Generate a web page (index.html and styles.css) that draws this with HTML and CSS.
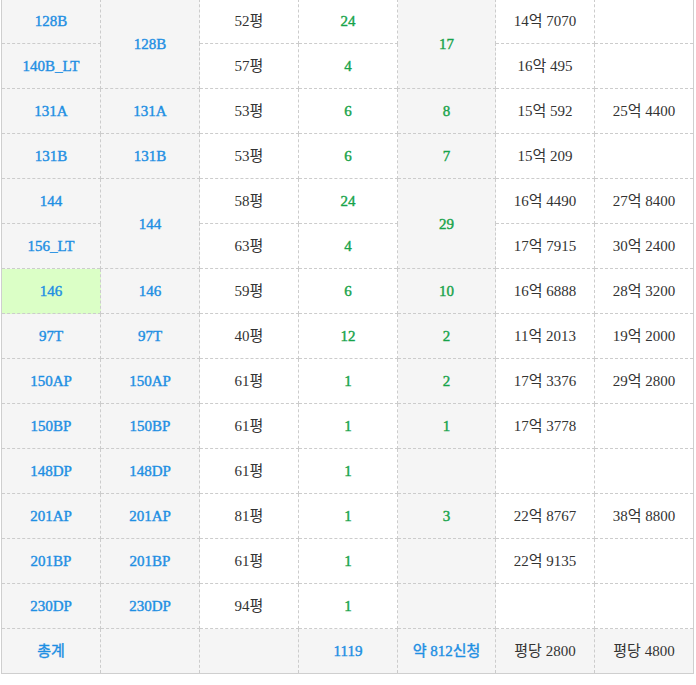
FILE: index.html
```html
<!DOCTYPE html>
<html lang="ko">
<head>
<meta charset="utf-8">
<title>분양가</title>
<link rel="stylesheet" href="styles.css">
</head>
<body>
<div class="wrap">
<table class="price">
<colgroup>
<col class="c"><col class="c"><col class="c"><col class="c"><col class="c5"><col class="c"><col class="c">
</colgroup>
<tbody>
<tr><td class="g b">128B</td><td class="g b" rowspan="2">128B</td><td>52평</td><td class="gr">24</td><td class="g gr" rowspan="2">17</td><td>14억 7070</td><td></td></tr>
<tr><td class="g b">140B_LT</td><td>57평</td><td class="gr">4</td><td>16악 495</td><td></td></tr>
<tr><td class="g b">131A</td><td class="g b">131A</td><td>53평</td><td class="gr">6</td><td class="g gr">8</td><td>15억 592</td><td>25억 4400</td></tr>
<tr><td class="g b">131B</td><td class="g b">131B</td><td>53평</td><td class="gr">6</td><td class="g gr">7</td><td>15억 209</td><td></td></tr>
<tr><td class="g b">144</td><td class="g b" rowspan="2">144</td><td>58평</td><td class="gr">24</td><td class="g gr" rowspan="2">29</td><td>16억 4490</td><td>27억 8400</td></tr>
<tr><td class="g b">156_LT</td><td>63평</td><td class="gr">4</td><td>17억 7915</td><td>30억 2400</td></tr>
<tr><td class="hl b">146</td><td class="g b">146</td><td>59평</td><td class="gr">6</td><td class="g gr">10</td><td>16억 6888</td><td>28억 3200</td></tr>
<tr><td class="g b">97T</td><td class="g b">97T</td><td>40평</td><td class="gr">12</td><td class="g gr">2</td><td>11억 2013</td><td>19억 2000</td></tr>
<tr><td class="g b">150AP</td><td class="g b">150AP</td><td>61평</td><td class="gr">1</td><td class="g gr">2</td><td>17억 3376</td><td>29억 2800</td></tr>
<tr><td class="g b">150BP</td><td class="g b">150BP</td><td>61평</td><td class="gr">1</td><td class="g gr">1</td><td>17억 3778</td><td></td></tr>
<tr><td class="g b">148DP</td><td class="g b">148DP</td><td>61평</td><td class="gr">1</td><td class="g"></td><td></td><td></td></tr>
<tr><td class="g b">201AP</td><td class="g b">201AP</td><td>81평</td><td class="gr">1</td><td class="g gr">3</td><td>22억 8767</td><td>38억 8800</td></tr>
<tr><td class="g b">201BP</td><td class="g b">201BP</td><td>61평</td><td class="gr">1</td><td class="g"></td><td>22억 9135</td><td></td></tr>
<tr><td class="g b">230DP</td><td class="g b">230DP</td><td>94평</td><td class="gr">1</td><td class="g"></td><td></td><td></td></tr>
<tr class="total"><td class="b">총계</td><td></td><td></td><td class="b">1119</td><td class="b">약 812신청</td><td>평당 2800</td><td>평당 4800</td></tr>
</tbody>
</table>
</div>
</body>
</html>
```
FILE: styles.css
```css
html, body {
  margin: 0;
  padding: 0;
  background: #ffffff;
}
.wrap {
  padding-left: 1px;
  margin-top: -2px;
}
.price {
  border-collapse: collapse;
  table-layout: fixed;
  width: 693px;
  border: 1px solid #cfcfcf;
  font-family: "Liberation Serif", "Noto Sans CJK KR", serif;
  font-size: 15px;
  line-height: 18px;
  color: #333333;
}
.price col.c { width: 99px; }
.price col.c5 { width: 98px; }
.price td {
  height: 44px;
  padding: 0;
  text-align: center;
  vertical-align: middle;
  border: 1px dashed #cccccc;
  white-space: nowrap;
}
.price .g { background: #f5f5f5; }
.price .hl { background: #dbffc6; }
.price .b {
  color: #1e8fe3;
  -webkit-text-stroke: 0.4px #1e8fe3;
}
.price .gr {
  color: #17a34a;
  -webkit-text-stroke: 0.4px #17a34a;
}
.price .total td { background: #f5f5f5; }
```
